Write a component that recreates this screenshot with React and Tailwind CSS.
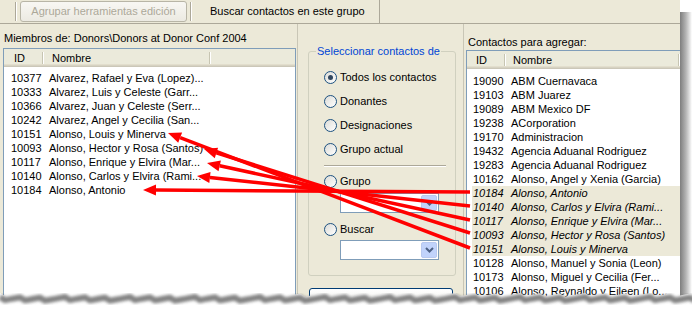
import React from 'react';

const members = [
  ['10377', 'Alvarez, Rafael y Eva (Lopez)...'],
  ['10333', 'Alvarez, Luis y Celeste (Garr...'],
  ['10366', 'Alvarez, Juan y Celeste (Serr...'],
  ['10242', 'Alvarez, Angel y Cecilia (San...'],
  ['10151', 'Alonso, Louis y Minerva'],
  ['10093', 'Alonso, Hector y Rosa (Santos)'],
  ['10117', 'Alonso, Enrique y Elvira (Mar...'],
  ['10140', 'Alonso, Carlos y Elvira (Rami...'],
  ['10184', 'Alonso, Antonio'],
];

const candidates = [
  ['19090', 'ABM Cuernavaca'],
  ['19103', 'ABM Juarez'],
  ['19089', 'ABM Mexico DF'],
  ['19238', 'ACorporation'],
  ['19170', 'Administracion'],
  ['19432', 'Agencia Aduanal Rodriguez'],
  ['19283', 'Agencia Aduanal Rodriguez'],
  ['10162', 'Alonso, Angel y Xenia (Garcia)'],
  ['10184', 'Alonso, Antonio', true],
  ['10140', 'Alonso, Carlos y Elvira (Rami...', true],
  ['10117', 'Alonso, Enrique y Elvira (Mar...', true],
  ['10093', 'Alonso, Hector y Rosa (Santos)', true],
  ['10151', 'Alonso, Louis y Minerva', true],
  ['10128', 'Alonso, Manuel y Sonia (Leon)'],
  ['10173', 'Alonso, Miguel y Cecilia (Fer...'],
  ['10106', 'Alonso, Reynaldo y Eileen (Lo...'],
];

// arrows from the right list back to the member list
const arrows = [
  { from: [470, 192], to: [143, 190] },
  { from: [470, 206], to: [197, 176] },
  { from: [470, 220], to: [207, 163] },
  { from: [470, 233], to: [204, 149] },
  { from: [470, 248], to: [168, 133] },
];

function arrowParts(from, to, len = 13, half = 5.5) {
  const dx = to[0] - from[0];
  const dy = to[1] - from[1];
  const d = Math.hypot(dx, dy);
  const ux = dx / d;
  const uy = dy / d;
  const bx = to[0] - ux * len;
  const by = to[1] - uy * len;
  const nx = -uy * half;
  const ny = ux * half;
  return {
    base: [bx, by],
    head: `${to[0]},${to[1]} ${bx + nx},${by + ny} ${bx - nx},${by - ny}`,
  };
}

const tear = [];
for (let x = 0; x <= 695; x += 5) {
  const j = ((x * 7919) % 13) / 13;
  tear.push([x, 8 + j * 4]);
}
const tearLine = tear.map(([x, y]) => `${x},${y}`).join(' ');
const tearShadow = tear.map(([x, y]) => `${x},${y + 4}`).join(' ');

function Divider() {
  return <span className="mt-[3px] h-[12px] w-[2px] shrink-0 border-l border-l-[#C7C5B2] border-r border-r-white" />;
}

function Radio({ label, checked }) {
  return (
    <div className="flex items-center h-[24px]">
      <span className="w-[13px] h-[13px] shrink-0 rounded-full border border-[#1C5180] bg-linear-to-br from-[#DCDCD7] to-white flex items-center justify-center">
        {checked && <span className="w-[5px] h-[5px] rounded-full bg-[#30465E]" />}
      </span>
      <span className="ml-[3px]">{label}</span>
    </div>
  );
}

function Combo() {
  return (
    <div className="ml-[16px] w-[99px] h-[20px] border border-[#7F9DB9] bg-white flex justify-end p-[1px]">
      <span className="w-[16px] h-full rounded-[2px] border border-[#B9C9EF] bg-[#C1D3FB] flex items-center justify-center">
        <svg width="9" height="6" viewBox="0 0 9 6">
          <path d="M1 1 L4.5 4.5 L8 1" fill="none" stroke="#4D6185" strokeWidth="2" />
        </svg>
      </span>
    </div>
  );
}

export default function App() {
  return (
    <div className="w-[692px] h-[309px] bg-white flex relative overflow-hidden font-['Liberation_Sans',Arial,sans-serif] text-[11px] text-black">
      <div className="w-[680px] h-full bg-[#ECE9D8] flex flex-col relative overflow-hidden shrink-0">
        {/* toolbar */}
        <div className="h-[24px] flex border-b border-[#ACA899] shrink-0">
          <span className="ml-[15px] mt-[2px] h-[19px] w-[2px] border-l border-l-[#ACA899] border-r border-r-white" />
          <div className="ml-[3px] mt-[1px] w-[167px] h-[21px] rounded-[3px] border border-[#B8B5A6] bg-linear-to-b from-[#F8F7F3] to-[#ECEAE2] flex items-center justify-center text-[#ACA899]">
            Agrupar herramientas edición
          </div>
          <span className="ml-[3px] mt-[2px] h-[19px] w-[2px] border-l border-l-[#ACA899] border-r border-r-white" />
          <div className="w-[188px] pl-[18px] flex items-center border-r border-[#ACA899] whitespace-nowrap">
            Buscar contactos en este grupo
          </div>
        </div>

        <div className="flex flex-1 min-h-0">
          {/* members */}
          <div className="w-[297px] shrink-0 pl-[3px] pt-[7px] flex flex-col">
            <div className="leading-[14px] pl-[1px] whitespace-nowrap">Miembros de: Donors\Donors at Donor Conf 2004</div>
            <div className="mt-[3px] w-[293px] flex-1 border border-[#7F9DB9] bg-white overflow-hidden">
              <div className="flex h-[18px] bg-[#EBEADB] shadow-[inset_0_-1px_0_#CBC7B8,inset_0_-2px_0_#D6D2C2,inset_0_-3px_0_#E2DECD]">
                <span className="w-[38px] pl-[10px] pt-[2px] leading-[14px]">ID</span>
                <Divider />
                <span className="w-[165px] pl-[8px] pt-[2px] leading-[14px]">Nombre</span>
                <Divider />
              </div>
              <div className="pt-[4px]">
                {members.map(([id, name]) => (
                  <div key={id} className="flex h-[14px] leading-[14px] whitespace-nowrap">
                    <span className="w-[38px] pl-[7px]">{id}</span>
                    <span className="pl-[7px]">{name}</span>
                  </div>
                ))}
              </div>
            </div>
          </div>

          {/* selection options */}
          <div className="w-[167px] shrink-0 border-l border-r border-[#C9C6B6] flex flex-col">
            <fieldset className="ml-[10px] mt-[20px] w-[148px] rounded-[3px] border border-[#D0D0BF] px-[7px]">
              <legend className="text-[#0046D5] leading-[14px] px-[1px]">Seleccionar contactos de</legend>
              <div className="ml-[8px] pt-[7px] pb-[15px]">
                <Radio label="Todos los contactos" checked />
                <Radio label="Donantes" />
                <Radio label="Designaciones" />
                <Radio label="Grupo actual" />
                <div className="mt-[4px] w-[122px] h-[2px] border-t border-t-[#ACA899] border-b border-b-white" />
                <div className="mt-[4px] h-[20px] flex items-center">
                  <Radio label="Grupo" />
                </div>
                <div className="mt-[2px]">
                  <Combo />
                </div>
                <div className="mt-[6px] h-[20px] flex items-center">
                  <Radio label="Buscar" />
                </div>
                <div className="mt-[1px]">
                  <Combo />
                </div>
              </div>
            </fieldset>
            <div className="ml-[11px] mt-[12px] w-[144px] h-[23px] shrink-0 rounded-[3px] border border-[#003C74] bg-linear-to-b from-white to-[#ECEBE6] flex items-center justify-center">
              Agregar
            </div>
          </div>

          {/* candidates */}
          <div className="flex-1 pl-[2px] pt-[11px] flex flex-col min-w-0">
            <div className="leading-[14px] pl-[2px] whitespace-nowrap">Contactos para agregar:</div>
            <div className="mt-[1px] w-[230px] flex-1 border border-[#7F9DB9] bg-white overflow-hidden">
              <div className="flex h-[18px] bg-[#EBEADB] shadow-[inset_0_-1px_0_#CBC7B8,inset_0_-2px_0_#D6D2C2,inset_0_-3px_0_#E2DECD]">
                <span className="w-[37px] pl-[9px] pt-[2px] leading-[14px]">ID</span>
                <Divider />
                <span className="w-[172px] pl-[7px] pt-[2px] leading-[14px]">Nombre</span>
                <Divider />
              </div>
              <div className="pt-[5px]">
                {candidates.map(([id, name, moved]) => (
                  <div
                    key={id + name}
                    className={moved
                      ? 'flex h-[14px] leading-[14px] ml-[5px] whitespace-nowrap bg-[#ECE9D8] italic'
                      : 'flex h-[14px] leading-[14px] ml-[5px] whitespace-nowrap'}
                  >
                    <span className="w-[32px] pl-[1px]">{id}</span>
                    <span className="pl-[7px]">{name}</span>
                  </div>
                ))}
              </div>
            </div>
          </div>
        </div>

        <svg className="absolute left-0 top-0 pointer-events-none" width="680" height="309">
          {arrows.map((a, i) => {
            const p = arrowParts(a.from, a.to);
            return (
              <g key={i}>
                <line x1={a.from[0]} y1={a.from[1]} x2={p.base[0]} y2={p.base[1]} stroke="#FF0000" strokeWidth="3.5" />
                <polygon points={p.head} fill="#FF0000" />
              </g>
            );
          })}
        </svg>
      </div>

      {/* right drop shadow */}
      <div className="mt-[12px] w-[12px] h-full bg-linear-to-r from-[#7E7E7E] via-[#B5B5B5] to-white" />

      {/* torn bottom edge */}
      <svg className="absolute left-0 top-[285px] pointer-events-none" width="692" height="24">
        <defs>
          <filter id="tearBlur" x="-5%" y="-100%" width="110%" height="300%">
            <feGaussianBlur stdDeviation="1.6" />
          </filter>
        </defs>
        <polygon points={`${tearLine} 695,24 0,24`} fill="#FFFFFF" />
        <polyline points={tearShadow} fill="none" stroke="#6E6E6E" strokeWidth="6" opacity="0.85" filter="url(#tearBlur)" />
      </svg>
    </div>
  );
}
